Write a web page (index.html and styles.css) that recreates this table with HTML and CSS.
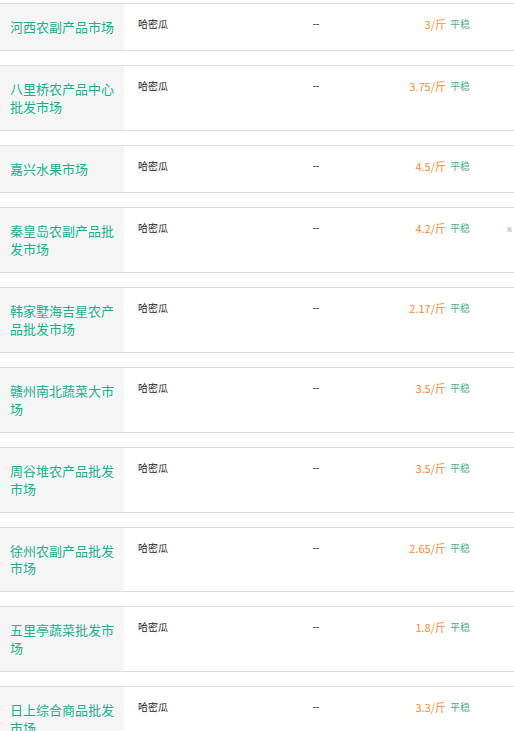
FILE: index.html
```html
<!DOCTYPE html>
<html lang="zh-CN">
<head>
<meta charset="utf-8">
<title>市场行情</title>
<link rel="stylesheet" href="styles.css">
</head>
<body>
<div class="list">
  <div class="row"><div class="name">河西农副产品市场</div><div class="prod">哈密瓜</div><div class="unit">--</div><div class="price">3/斤</div><div class="trend">平稳</div></div>
  <div class="row"><div class="name">八里桥农产品中心批发市场</div><div class="prod">哈密瓜</div><div class="unit">--</div><div class="price">3.75/斤</div><div class="trend">平稳</div></div>
  <div class="row"><div class="name">嘉兴水果市场</div><div class="prod">哈密瓜</div><div class="unit">--</div><div class="price">4.5/斤</div><div class="trend">平稳</div></div>
  <div class="row"><div class="name">秦皇岛农副产品批发市场</div><div class="prod">哈密瓜</div><div class="unit">--</div><div class="price">4.2/斤</div><div class="trend">平稳</div><span class="peek">报</span></div>
  <div class="row"><div class="name">韩家墅海吉星农产品批发市场</div><div class="prod">哈密瓜</div><div class="unit">--</div><div class="price">2.17/斤</div><div class="trend">平稳</div></div>
  <div class="row"><div class="name">赣州南北蔬菜大市场</div><div class="prod">哈密瓜</div><div class="unit">--</div><div class="price">3.5/斤</div><div class="trend">平稳</div></div>
  <div class="row"><div class="name">周谷堆农产品批发市场</div><div class="prod">哈密瓜</div><div class="unit">--</div><div class="price">3.5/斤</div><div class="trend">平稳</div></div>
  <div class="row"><div class="name">徐州农副产品批发市场</div><div class="prod">哈密瓜</div><div class="unit">--</div><div class="price">2.65/斤</div><div class="trend">平稳</div></div>
  <div class="row"><div class="name">五里亭蔬菜批发市场</div><div class="prod">哈密瓜</div><div class="unit">--</div><div class="price">1.8/斤</div><div class="trend">平稳</div></div>
  <div class="row"><div class="name">日上综合商品批发市场</div><div class="prod">哈密瓜</div><div class="unit">--</div><div class="price">3.3/斤</div><div class="trend">平稳</div></div>
</div>
</body>
</html>
```
FILE: styles.css
```css
html, body {
  margin: 0;
  padding: 0;
  background: #fff;
  overflow: hidden;
}
body {
  font-family: "Noto Sans CJK SC", "Noto Sans", sans-serif;
  padding-top: 3px;
}
.list {
  display: flex;
  flex-direction: column;
  gap: 14px;
}
.row {
  position: relative;
  display: flex;
  align-items: stretch;
  border-top: 1px solid #dcdcdc;
  border-bottom: 1px solid #dcdcdc;
}
.name {
  box-sizing: border-box;
  width: 124px;
  flex: none;
  padding: 14px 10px 14.1px;
  background: #f5f5f5;
  color: #17b08f;
  font-size: 13px;
  line-height: 17.9px;
  word-break: break-all;
}
.prod, .unit, .price, .trend {
  padding-top: 14px;
  font-size: 10px;
  line-height: 12px;
}
.prod {
  width: 150px;
  padding-left: 14px;
  color: #222;
  flex: none;
}
.unit {
  width: 56px;
  text-align: center;
  color: #333;
  font-family: "Liberation Sans", sans-serif;
  flex: none;
}
.price {
  width: 102px;
  text-align: right;
  color: #f58a30;
  font-size: 11px;
  flex: none;
}
.trend {
  padding-left: 4px;
  color: #55a98a;
  font-size: 10px;
}
.peek {
  position: absolute;
  left: 507px;
  top: 18px;
  font-size: 5px;
  line-height: 6px;
  color: #aab0c0;
}
```
